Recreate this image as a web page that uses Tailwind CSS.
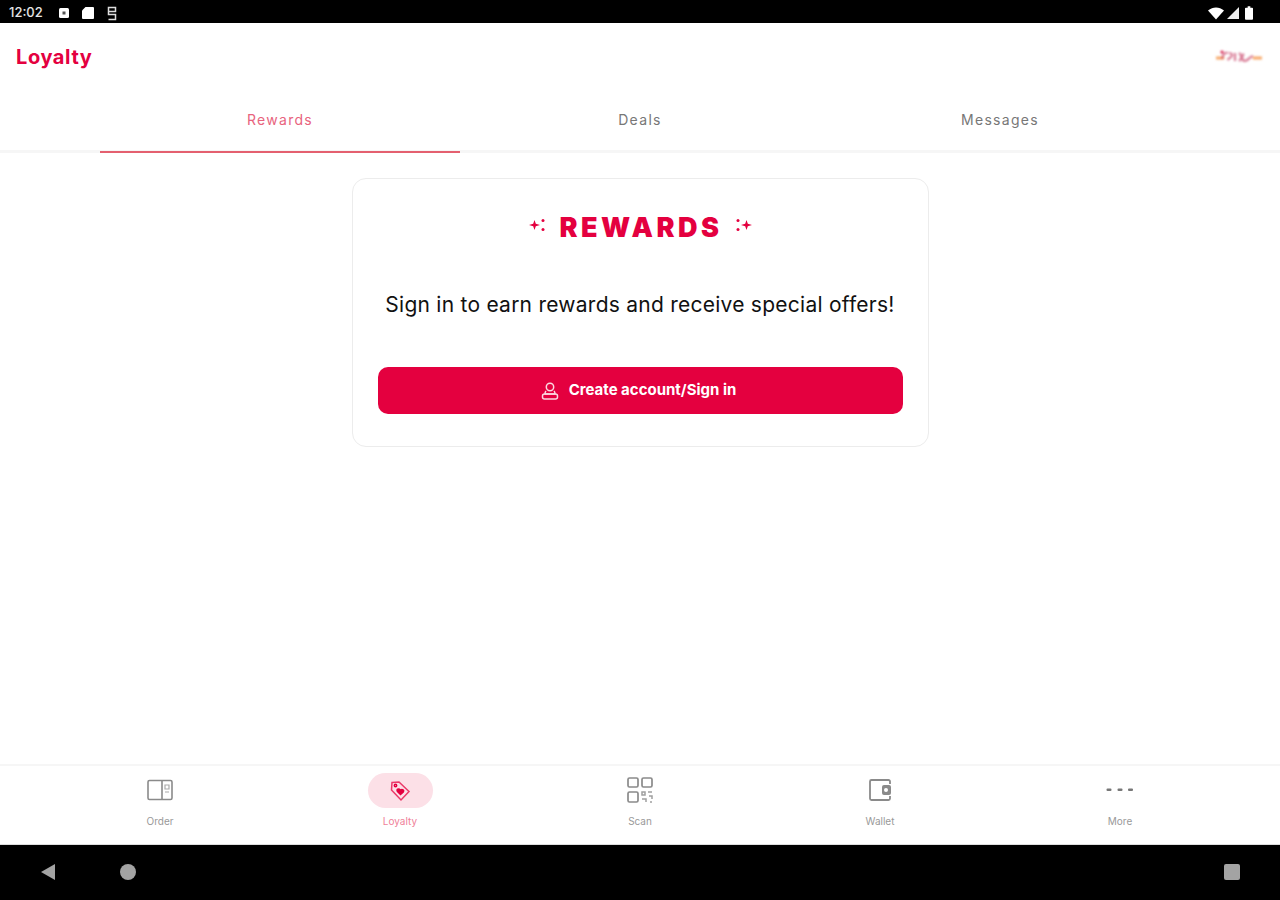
<!DOCTYPE html>
<html lang="en">
  <head>
    <meta charset="UTF-8" />
    <title>Loyalty</title>
    <script src="https://cdn.jsdelivr.net/npm/@tailwindcss/browser@4"></script>
  </head>
  <body class="bg-white font-['Inter',sans-serif]">
    <div class="flex flex-col w-[1280px] h-[900px] overflow-hidden">
      <!-- Status bar -->
      <div class="h-[23px] bg-black flex items-center justify-between pt-[3px] pl-[9px] pr-[27px] text-white">
        <div class="flex items-center">
          <span class="text-[13px] font-medium w-[49px] text-white/90">12:02</span>
          <svg class="w-[12px] h-[12px] mr-[11px]" viewBox="0 0 12 12"><rect x="1" y="1" width="10" height="10" rx="1.5" fill="#fff"/><rect x="4.500" y="4.500" width="3" height="3" fill="#555"/></svg>
          <svg class="w-[14px] h-[14px] mr-[11px]" viewBox="0 0 14 14"><path d="M4.500 1H12a1 1 0 0 1 1 1v10a1 1 0 0 1-1 1H2a1 1 0 0 1-1-1V4.500z" fill="#fff"/></svg>
          <svg class="w-[12px] h-[15px]" viewBox="0 0 12 15" fill="none" stroke="#ddd" stroke-width="1.500"><path d="M2.500 1.500h7v4h-7zM2.500 5.500v3h7v5h-7M5 8.500h2"/></svg>
        </div>
        <div class="flex items-center">
          <svg class="w-[18px] h-[14px]" viewBox="0 0 18 14"><path d="M1 4.500C6 .5 12 .5 17 4.500L9 13.500z" fill="#fff"/></svg>
          <svg class="w-[14px] h-[14px] ml-[1px]" viewBox="0 0 14 14"><path d="M13 1v12H1z" fill="#eee"/></svg>
          <svg class="w-[8px] h-[14px] ml-[5px]" viewBox="0 0 9 15"><path d="M3 0h3v1.500h2a1 1 0 0 1 1 1V14a1 1 0 0 1-1 1H1a1 1 0 0 1-1-1V2.500a1 1 0 0 1 1-1h2z" fill="#fff"/></svg>
        </div>
      </div>

      <!-- Header -->
      <div class="h-[67px] flex items-center justify-between pl-[16px] pr-[18px]">
        <h1 class="text-[20px] font-bold tracking-[0.6px] text-[#e4003f]">Loyalty</h1>
        <svg class="w-[46px] h-[18px] mt-[-2px] blur-[0.8px]" viewBox="0 0 46 18" fill="none">
          <path d="M1 11h6M38 11h7" stroke="#f8a868" stroke-width="3" stroke-linecap="round"/>
          <path d="M6 12c1-5 3-7 6-6M13 6c3 0 4 2 2 4s-4 2-2 3M19 6v8M23 6c3 2 3 6 0 8M28 7c-3 2-2 7 1 7s4-4 8-5" stroke="#c9466b" stroke-opacity=".7" stroke-width="2.200"/>
          <circle cx="6" cy="5" r="1.500" fill="#d5103f"/>
        </svg>
      </div>

      <!-- Tabs -->
      <div class="h-[63px] flex justify-center border-b-[3px] border-[#f6f6f6]">
        <div class="w-[360px] h-[63px] flex justify-center pt-[19px] border-b-2 border-[#e4606f] text-[14px] tracking-[1.300px] text-[#e8637d]">Rewards</div>
        <div class="w-[360px] flex justify-center pt-[19px] text-[14px] tracking-[1.300px] text-[#777]">Deals</div>
        <div class="w-[360px] flex justify-center pt-[19px] text-[14px] tracking-[1.300px] text-[#777]">Messages</div>
      </div>

      <!-- Main -->
      <main class="flex-1 flex justify-center pt-[25px]">
        <div class="w-[577px] h-[269px] border border-[#ececec] rounded-[14px] flex flex-col items-center px-[25px]">
          <div class="flex items-center mt-[30px] h-[36px]">
            <svg class="w-[16px] h-[16px] mt-[-5px]" viewBox="0 0 16 16" fill="#e4003f"><path d="M5.500 3l1.300 3.700L11 8 6.800 9.300 5.500 13 4.200 9.300 0 8l4.200-1.300z"/><circle cx="14" cy="3.500" r="1.500"/><circle cx="14" cy="12.500" r="1.500"/></svg>
            <span class="ml-[15px] mr-[13px] text-[27px] font-black tracking-[3.500px] text-[#e4003f] leading-none">REWARDS</span>
            <svg class="w-[16px] h-[16px] mt-[-5px]" viewBox="0 0 16 16" fill="#e4003f"><path d="M10.500 3l1.300 3.700L16 8l-4.200 1.300L10.500 13 9.200 9.300 5 8l4.200-1.300z"/><circle cx="2" cy="3.500" r="1.500"/><circle cx="2" cy="12.500" r="1.500"/></svg>
          </div>
          <p class="mt-[46px] text-[21px] tracking-[0.25px] text-[#111] leading-[28px] whitespace-nowrap">Sign in to earn rewards and receive special offers!</p>
          <button class="mt-[48px] w-[525px] h-[47px] bg-[#e4003f] rounded-[10px] flex items-center justify-center gap-[9px] pr-[4px] text-white text-[15px] font-bold">
            <svg class="w-[20px] h-[20px]" viewBox="0 0 20 20" fill="none" stroke="#fbd7e0" stroke-width="1.500"><circle cx="10" cy="6" r="3.700"/><path d="M6 10c-1 1-1 2-1 3h10c0-1 0-2-1-3"/><rect x="2.500" y="13" width="15" height="5" rx="2"/></svg>
            Create account/Sign in
          </button>
        </div>
      </main>

      <!-- Bottom nav -->
      <nav class="h-[81px] border-t-2 border-[#f6f6f6] border-b border-b-[#ddd] grid grid-cols-[repeat(4,240px)_1fr] px-[40px]">
        <div class="flex flex-col items-center pt-[8px] text-[#999]">
          <div class="h-[32px] flex items-center justify-center">
            <svg class="w-[26px] h-[22px]" viewBox="0 0 26 22" fill="none" stroke="#8a8a8a" stroke-width="1.600"><rect x="1" y="1.500" width="24" height="19" rx="1.500"/><path d="M15 1.500v19"/><path d="M18 6h4v4h-4zM18 13h4" stroke-width="1.200" stroke="#aaa"/></svg>
          </div>
          <span class="mt-[8px] text-[10px]">Order</span>
        </div>
        <div class="flex flex-col items-center pt-[7px] text-[#ef7f99]">
          <div class="w-[65px] h-[35px] rounded-full bg-[#fce0e7] flex items-center justify-center">
            <svg class="w-[24px] h-[24px]" viewBox="0 0 24 24" fill="none" stroke="#e4003f" stroke-width="1.500"><path d="M4 3.500l7-.5 10 9.500-8 8.500L3.500 11z" stroke-opacity=".75"/><circle cx="7.500" cy="6.500" r="1.200"/><path d="M12.500 15.500l-3-3c-1.500-2 1-3.500 3-1.500 2-1.500 4 .5 2.800 2z" fill="#e4003f"/></svg>
          </div>
          <span class="mt-[6px] text-[10px]">Loyalty</span>
        </div>
        <div class="flex flex-col items-center pt-[8px] text-[#999]">
          <div class="h-[32px] flex items-center justify-center">
            <svg class="w-[26px] h-[26px]" viewBox="0 0 26 26" fill="none" stroke="#8a8a8a" stroke-width="1.700"><rect x="1" y="1" width="10" height="9" rx="1.500"/><rect x="15" y="1" width="10" height="9" rx="1.500"/><rect x="1" y="15" width="10" height="10" rx="1.500"/><path d="M15 15h3v3h-3zM21 15h4M22 19h3v3M15 22h4v3M23 25h2" stroke-width="1.500" stroke="#a0a0a0"/></svg>
          </div>
          <span class="mt-[8px] text-[10px]">Scan</span>
        </div>
        <div class="flex flex-col items-center pt-[8px] text-[#999]">
          <div class="h-[32px] flex items-center justify-center">
            <svg class="w-[24px] h-[24px]" viewBox="0 0 24 24" fill="none" stroke="#8a8a8a" stroke-width="1.800"><path d="M22 6V3.500a1.500 1.500 0 0 0-1.500-1.500h-17A1.500 1.500 0 0 0 2 3.500v17A1.500 1.500 0 0 0 3.500 22h17a1.500 1.500 0 0 0 1.500-1.500V18"/><rect x="14" y="7" width="9" height="10" rx="2" fill="#8a8a8a" stroke="none"/><circle cx="18" cy="12" r="2" fill="#fff" stroke="none"/></svg>
          </div>
          <span class="mt-[8px] text-[10px]">Wallet</span>
        </div>
        <div class="flex flex-col items-center pt-[8px] text-[#999]">
          <div class="h-[32px] flex items-center justify-center">
            <svg class="w-[28px] h-[4px]" viewBox="0 0 28 4" fill="#777"><rect x="0.500" y="0.500" width="5" height="2.500" rx="1"/><rect x="11.500" y="0.500" width="5" height="2.500" rx="1"/><rect x="22" y="0.500" width="5" height="2.500" rx="1"/></svg>
          </div>
          <span class="mt-[8px] text-[10px]">More</span>
        </div>
      </nav>

      <!-- Android nav bar -->
      <div class="h-[55px] bg-black flex items-center pb-[2px] pl-[40px] pr-[40px]">
        <svg class="w-[16px] h-[18px]" viewBox="0 0 16 18"><path d="M15 1v16L1 9z" fill="#a3a3a3"/></svg>
        <div class="w-[16px] h-[16px] rounded-full bg-[#a3a3a3] ml-[64px]"></div>
        <div class="w-[16px] h-[16px] rounded-[2px] bg-[#a3a3a3] ml-auto"></div>
      </div>
    </div>
  </body>
</html>
